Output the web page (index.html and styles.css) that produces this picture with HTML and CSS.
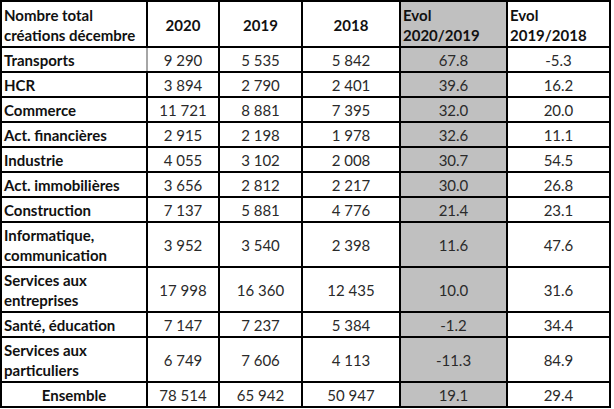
FILE: index.html
```html
<!DOCTYPE html>
<html lang="fr">
<head>
<meta charset="utf-8">
<title>Créations décembre</title>
<link rel="stylesheet" href="styles.css">
</head>
<body>
<table class="grid">
  <colgroup>
    <col class="c-label"><col class="c-y20"><col class="c-y19"><col class="c-y18"><col class="c-ev1"><col class="c-ev2">
  </colgroup>
  <thead>
    <tr class="head">
      <th class="lab">Nombre total<br>créations décembre</th>
      <th>2020</th>
      <th>2019</th>
      <th>2018</th>
      <th class="lab shade">Evol<br>2020/2019</th>
      <th class="lab">Evol<br>2019/2018</th>
    </tr>
  </thead>
  <tbody>
    <tr><td class="lab first-soft">Transports</td><td>9 290</td><td>5 535</td><td>5 842</td><td class="shade">67.8</td><td>-5.3</td></tr>
    <tr><td class="lab">HCR</td><td>3 894</td><td>2 790</td><td>2 401</td><td class="shade">39.6</td><td>16.2</td></tr>
    <tr><td class="lab">Commerce</td><td>11 721</td><td>8 881</td><td>7 395</td><td class="shade">32.0</td><td>20.0</td></tr>
    <tr><td class="lab">Act. financières</td><td>2 915</td><td>2 198</td><td>1 978</td><td class="shade">32.6</td><td>11.1</td></tr>
    <tr><td class="lab">Industrie</td><td>4 055</td><td>3 102</td><td>2 008</td><td class="shade">30.7</td><td>54.5</td></tr>
    <tr><td class="lab">Act. immobilières</td><td>3 656</td><td>2 812</td><td>2 217</td><td class="shade">30.0</td><td>26.8</td></tr>
    <tr><td class="lab">Construction</td><td>7 137</td><td>5 881</td><td>4 776</td><td class="shade">21.4</td><td>23.1</td></tr>
    <tr class="tall"><td class="lab">Informatique,<br>communication</td><td>3 952</td><td>3 540</td><td>2 398</td><td class="shade">11.6</td><td>47.6</td></tr>
    <tr class="tall"><td class="lab">Services aux<br>entreprises</td><td>17 998</td><td>16 360</td><td>12 435</td><td class="shade">10.0</td><td>31.6</td></tr>
    <tr><td class="lab">Santé, éducation</td><td>7 147</td><td>7 237</td><td>5 384</td><td class="shade">-1.2</td><td>34.4</td></tr>
    <tr class="tall"><td class="lab">Services aux<br>particuliers</td><td>6 749</td><td>7 606</td><td>4 113</td><td class="shade">-11.3</td><td>84.9</td></tr>
    <tr><td class="lab total">Ensemble</td><td>78 514</td><td>65 942</td><td>50 947</td><td class="shade">19.1</td><td>29.4</td></tr>
  </tbody>
</table>
</body>
</html>
```

FILE: styles.css
```css
html, body {
  margin: 0;
  padding: 0;
  background: #ffffff;
}

body {
  font-family: Lato, "Liberation Sans", Arial, sans-serif;
  font-size: 15px;
  color: #2a2a2a;
}

.grid {
  border-collapse: collapse;
  table-layout: fixed;
  width: 611px;
  margin: 0;
}

.c-label { width: 146px; }
.c-y20 { width: 72px; }
.c-y19 { width: 83px; }
.c-y18 { width: 98px; }
.c-ev1 { width: 107px; }
.c-ev2 { width: 103px; }

.grid th,
.grid td {
  border: 2px solid #000;
  padding: 0 2px;
  line-height: 20px;
  text-align: center;
  vertical-align: middle;
  white-space: nowrap;
  overflow: hidden;
}

.grid th {
  font-weight: 700;
  color: #111;
  height: 42px;
  padding-top: 2px;
  padding-bottom: 0;
}

.grid td {
  height: 23px;
}

.grid tr.tall td {
  height: 43px;
}

.grid .lab {
  text-align: left;
  font-weight: 700;
  color: #111;
}

.grid .total {
  text-align: center;
}

.grid .shade {
  background: #c0c0c0;
}

.grid .first-soft {
  border-right-color: #a6a6a6;
}
```
